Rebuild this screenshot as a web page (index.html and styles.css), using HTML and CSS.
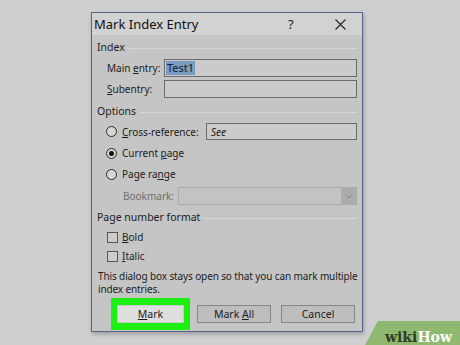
FILE: index.html
```html
<!DOCTYPE html>
<html lang="en">
<head>
    <meta charset="UTF-8">
    <title>Mark Index Entry</title>
    <link rel="stylesheet" href="styles.css">
</head>
<body>
    <div class="dialog">
        <div class="titlebar">
            <span class="title">Mark Index Entry</span>
            <span class="help">?</span>
            <span class="close">
                <svg width="11" height="11" viewBox="0 0 11 11"><path d="M0.5 0.5 L10.5 10.5 M10.5 0.5 L0.5 10.5" stroke="#222" stroke-width="1.1" fill="none"/></svg>
            </span>
        </div>
        <div class="content">
            <div class="group-head"><span>Index</span><i class="rule"></i></div>
            <div class="field-row">
                <span class="label">Main <u>e</u>ntry:</span>
                <div class="input"><span class="selected">Test1</span></div>
            </div>
            <div class="field-row sub">
                <span class="label"><u>S</u>ubentry:</span>
                <div class="input"></div>
            </div>

            <div class="group-head opt"><span>Options</span><i class="rule"></i></div>
            <div class="radio-row cross">
                <span class="radio"></span>
                <span class="radio-text"><u>C</u>ross-reference:</span>
                <div class="input see"><em>See</em></div>
            </div>
            <div class="radio-row current">
                <span class="radio checked"></span>
                <span class="radio-text">Current <u>p</u>age</span>
            </div>
            <div class="radio-row range">
                <span class="radio"></span>
                <span class="radio-text">Page ra<u>n</u>ge</span>
            </div>
            <div class="bookmark-row">
                <span class="label dim">Bookmark:</span>
                <div class="select"><span class="arrow">
                    <svg width="8" height="5" viewBox="0 0 8 5"><path d="M0.5 0.5 L4 4 L7.5 0.5" stroke="#8a8a8a" fill="none"/></svg>
                </span></div>
            </div>

            <div class="group-head fmt"><span>Page number format</span><i class="rule"></i></div>
            <div class="check-row bold">
                <span class="check"></span>
                <span><u>B</u>old</span>
            </div>
            <div class="check-row italic">
                <span class="check"></span>
                <span><u>I</u>talic</span>
            </div>

            <p class="note">This dialog box stays open so that you can mark multiple index entries.</p>

            <div class="buttons">
                <div class="highlight"><button class="btn default"><u>M</u>ark</button></div>
                <button class="btn all">Mark <u>A</u>ll</button>
                <button class="btn cancel">Cancel</button>
            </div>
        </div>
    </div>

    <div class="wikihow">
        <svg class="wh-bg" width="95" height="24" viewBox="0 0 95 24"><polygon points="13,0 95,0 95,24 0,24" fill="#8fb870"/></svg>
        <span class="wh-text"><b class="wiki">wiki</b><b class="how">How</b></span>
    </div>
</body>
</html>
```

FILE: styles.css
```css
body {
    margin: 0;
    padding: 12px 0 0 91px;
    background-color: #cfcfcf;
    font-family: "Noto Sans", "DejaVu Sans", sans-serif;
    font-size: 10px;
    color: #1c1c1c;
    height: 345px;
    box-sizing: border-box;
    overflow: hidden;
    position: relative;
}
.dialog {
    width: 272px;
    height: 320px;
    box-sizing: border-box;
    border: 1px solid #56648f;
    background-color: #c5c5c5;
    box-shadow: 1px 2px 4px rgba(0, 0, 0, 0.25);
    display: flex;
    flex-direction: column;
}
.titlebar {
    height: 22px;
    background-color: #d2d2d2;
    display: flex;
    align-items: center;
    padding-left: 2px;
}
.title {
    font-size: 13px;
    color: #111;
    flex: 1;
}
.help {
    font-size: 13px;
    width: 14px;
    margin-right: 33px;
    color: #222;
}
.close {
    display: flex;
    margin-right: 16px;
}
.content {
    padding: 0 5px 0 5px;
    display: flex;
    flex-direction: column;
}
.group-head {
    height: 24px;
    display: flex;
    align-items: center;
    gap: 4px;
    font-size: 10.5px;
}
.group-head.opt {
    margin-top: 1px;
    height: 24px;
}
.group-head .rule {
    flex: 1;
    height: 1px;
    background-color: #d6d6d6;
    margin-top: 2px;
}
.field-row {
    height: 18px;
    display: flex;
    align-items: center;
    padding-left: 10px;
}
.field-row.sub {
    margin-top: 3px;
}
.label {
    width: 57px;
}
.label.dim {
    color: #6e6e6e;
    width: 55px;
}
.input {
    flex: 1;
    height: 100%;
    box-sizing: border-box;
    border: 1px solid #6c6c6c;
    background-color: #cbcbcb;
    display: flex;
    align-items: center;
    padding-left: 1px;
}
.selected {
    background-color: #7b9cc4;
    color: #1a1a2a;
    padding: 0 1px;
    line-height: 14px;
    font-size: 11px;
}
.radio-row {
    display: flex;
    align-items: center;
    padding-left: 9px;
    height: 20px;
}
.radio-row.cross {
    height: 17px;
}
.radio-row.current {
    height: 22px;
    margin-top: 2px;
}
.radio {
    width: 11px;
    height: 11px;
    box-sizing: border-box;
    border: 1px solid #2a2a2a;
    border-radius: 50%;
    background-color: #d6d6d6;
    display: flex;
    align-items: center;
    justify-content: center;
    margin-right: 5px;
}
.radio.checked::after {
    content: "";
    width: 5px;
    height: 5px;
    border-radius: 50%;
    background-color: #111;
}
.radio-text {
    width: 84px;
}
.input.see {
    padding-left: 4px;
}
.bookmark-row {
    height: 18px;
    margin-top: 3px;
    display: flex;
    align-items: center;
    padding-left: 26px;
}
.select {
    flex: 1;
    height: 100%;
    box-sizing: border-box;
    border: 1px solid #a9a9a9;
    background-color: #c3c3c3;
    display: flex;
    justify-content: flex-end;
}
.arrow {
    width: 15px;
    background-color: #acacac;
    display: flex;
    align-items: center;
    justify-content: center;
}
.check-row {
    display: flex;
    align-items: center;
    padding-left: 10px;
    gap: 4px;
    height: 16px;
}
.check-row.italic {
    height: 20px;
    margin-top: 1px;
}
.check {
    width: 11px;
    height: 11px;
    box-sizing: border-box;
    border: 1px solid #555;
    background-color: #cdcdcd;
}
.note {
    margin: 4px 0 0 1px;
    line-height: 13px;
    width: 260px;
    letter-spacing: -0.12px;
}
.buttons {
    margin-top: 2px;
    display: flex;
    align-items: center;
    padding-left: 14px;
}
.highlight {
    background-color: #1cf012;
    padding: 7px 6px;
}
.btn {
    height: 18px;
    width: 74px;
    box-sizing: border-box;
    border: 1px solid #858585;
    background-color: #bebebe;
    font-family: "Noto Sans", "DejaVu Sans", sans-serif;
    font-size: 10.5px;
    color: #1c1c1c;
    padding: 0;
}
.btn.default {
    width: 67px;
    background-color: #dedede;
    border-color: #c8c8c8;
    display: block;
}
.btn.all {
    margin-left: 7px;
}
.btn.cancel {
    margin-left: 10px;
}
.wikihow {
    position: absolute;
    right: 0;
    bottom: 0;
    width: 95px;
    height: 24px;
}
.wh-bg {
    position: absolute;
    left: 0;
    top: 0;
}
.wh-text {
    position: absolute;
    left: 20px;
    top: 8px;
    font-family: "DejaVu Serif", serif;
    font-size: 14px;
    line-height: 16px;
}
.wiki {
    color: #2e3d24;
}
.how {
    color: #ffffff;
}
```
